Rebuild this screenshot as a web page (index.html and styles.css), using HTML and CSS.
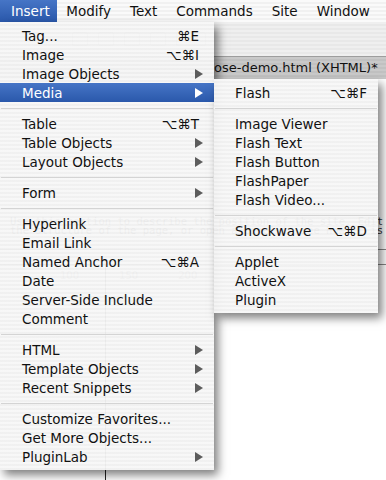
FILE: index.html
```html
<!DOCTYPE html>
<html lang="en">
<head>
  <meta charset="UTF-8" />
  <meta name="viewport" content="width=device-width, initial-scale=1.0" />
  <title>Insert Menu</title>
  <link rel="stylesheet" href="styles.css">
</head>
<body>

  <div class="menubar">
    <span class="menubar-item active">Insert</span>
    <span class="menubar-item">Modify</span>
    <span class="menubar-item">Text</span>
    <span class="menubar-item">Commands</span>
    <span class="menubar-item">Site</span>
    <span class="menubar-item">Window</span>
  </div>

  <div class="window">
    <div class="toolbar">
      <span class="tool"></span>
      <span class="tool"></span>
      <span class="tool"></span>
      <span class="tool"></span>
      <span class="tool wide"></span>
    </div>
    <div class="titlebar"><span>ose-demo.html (XHTML)*</span></div>
    <div class="doc">
      <p class="doc-text">Use this section to describe the position of the site. Edit<br>the structure of the page, or open a panel to see how it is</p>
      <div class="doc-rule"></div>
      <div class="doc-rule"></div>
      <div class="doc-table">
        <span>100</span><span>150</span><span>200</span>
      </div>
      <div class="doc-col"></div>
    </div>
  </div>

  <!-- Insert menu -->
  <div class="menu main-menu">
    <div class="item"><span>Tag...</span><span class="key">&#8984;E</span></div>
    <div class="item"><span>Image</span><span class="key">&#8997;&#8984;I</span></div>
    <div class="item sub"><span>Image Objects</span><svg class="arrow" width="8" height="10"><polygon points="0,0 8,5 0,10" /></svg></div>
    <div class="item sub selected"><span>Media</span><svg class="arrow" width="8" height="10"><polygon points="0,0 8,5 0,10" /></svg></div>
    <div class="sep"></div>
    <div class="item"><span>Table</span><span class="key">&#8997;&#8984;T</span></div>
    <div class="item sub"><span>Table Objects</span><svg class="arrow" width="8" height="10"><polygon points="0,0 8,5 0,10" /></svg></div>
    <div class="item sub"><span>Layout Objects</span><svg class="arrow" width="8" height="10"><polygon points="0,0 8,5 0,10" /></svg></div>
    <div class="sep"></div>
    <div class="item sub"><span>Form</span><svg class="arrow" width="8" height="10"><polygon points="0,0 8,5 0,10" /></svg></div>
    <div class="sep"></div>
    <div class="item"><span>Hyperlink</span></div>
    <div class="item"><span>Email Link</span></div>
    <div class="item"><span>Named Anchor</span><span class="key">&#8997;&#8984;A</span></div>
    <div class="item"><span>Date</span></div>
    <div class="item"><span>Server-Side Include</span></div>
    <div class="item"><span>Comment</span></div>
    <div class="sep"></div>
    <div class="item sub"><span>HTML</span><svg class="arrow" width="8" height="10"><polygon points="0,0 8,5 0,10" /></svg></div>
    <div class="item sub"><span>Template Objects</span><svg class="arrow" width="8" height="10"><polygon points="0,0 8,5 0,10" /></svg></div>
    <div class="item sub"><span>Recent Snippets</span><svg class="arrow" width="8" height="10"><polygon points="0,0 8,5 0,10" /></svg></div>
    <div class="sep"></div>
    <div class="item"><span>Customize Favorites...</span></div>
    <div class="item"><span>Get More Objects...</span></div>
    <div class="item sub"><span>PluginLab</span><svg class="arrow" width="8" height="10"><polygon points="0,0 8,5 0,10" /></svg></div>
  </div>

  <!-- Media submenu -->
  <div class="menu media-menu">
    <div class="item"><span>Flash</span><span class="key">&#8997;&#8984;F</span></div>
    <div class="sep"></div>
    <div class="item"><span>Image Viewer</span></div>
    <div class="item"><span>Flash Text</span></div>
    <div class="item"><span>Flash Button</span></div>
    <div class="item"><span>FlashPaper</span></div>
    <div class="item"><span>Flash Video...</span></div>
    <div class="sep"></div>
    <div class="item"><span>Shockwave</span><span class="key">&#8997;&#8984;D</span></div>
    <div class="sep"></div>
    <div class="item"><span>Applet</span></div>
    <div class="item"><span>ActiveX</span></div>
    <div class="item"><span>Plugin</span></div>
  </div>

</body>
</html>
```

FILE: styles.css
```css
* {
  box-sizing: border-box;
}

body {
  margin: 0;
  width: 386px;
  height: 480px;
  overflow: hidden;
  position: relative;
  background: #fff;
  font-family: "Lucida Grande", "DejaVu Sans", sans-serif;
  font-size: 13.5px;
  color: #111;
}

/* Menu bar */
.menubar {
  height: 22px;
  display: flex;
  align-items: center;
  background: repeating-linear-gradient(to bottom, #fafafa 0 2px, #f1f1f1 2px 4px);
}

.menubar-item {
  height: 22px;
  line-height: 22px;
  padding: 0 9.5px;
}

.menubar-item.active {
  padding: 0 7px 0 11px;
  color: #fff;
  background: linear-gradient(to bottom, #4675c6, #2a58ab);
}

/* Document window behind the menus */
.toolbar {
  height: 35px;
  display: flex;
  align-items: center;
  gap: 10px;
  padding-left: 72px;
  background: repeating-linear-gradient(to bottom, #efefef 0 2px, #e8e8e8 2px 4px);
  border-bottom: 1px solid #9d9d9d;
}

.tool {
  width: 16px;
  height: 14px;
  border: 1px solid #b5b5b5;
  border-radius: 2px;
}

.tool.wide {
  width: 30px;
}

.titlebar {
  height: 22px;
  line-height: 22px;
  padding-left: 214px;
  background: repeating-linear-gradient(to bottom, #c9c9c9 0 2px, #c1c1c1 2px 4px);
  font-size: 13px;
  color: #111;
  white-space: nowrap;
}

.doc {
  position: relative;
  height: 401px;
  background: #fff;
}

.doc-text {
  margin: 0;
  padding: 138px 0 0 10px;
  font-family: "DejaVu Sans Mono", monospace;
  font-size: 10.5px;
  line-height: 9px;
  white-space: nowrap;
  color: #333;
}

.doc-rule {
  height: 1px;
  background: #888;
  margin-top: 14px;
}

.doc-table {
  display: flex;
  gap: 40px;
  padding: 5px 0 0 60px;
  font-size: 10px;
  color: #777;
}

.doc-col {
  position: absolute;
  left: 105px;
  top: 185px;
  bottom: 0;
  width: 1px;
  background: #222;
}

/* Menus */
.menu {
  position: absolute;
  padding: 4px 0;
  background: repeating-linear-gradient(to bottom, rgba(247, 247, 247, 0.96) 0 2px, rgba(240, 240, 240, 0.96) 2px 4px);
  box-shadow: 4px 5px 9px rgba(0, 0, 0, 0.5);
}

.main-menu {
  left: 0;
  top: 22px;
  width: 214px;
}

.media-menu {
  left: 214px;
  top: 79px;
  width: 164px;
}

.item {
  height: 19px;
  display: flex;
  align-items: center;
  padding: 0 15px 0 22px;
  white-space: nowrap;
  color: #111;
}

.media-menu .item {
  padding: 0 11px 0 21px;
}

.item.sub {
  padding-right: 11px;
}

.item .key,
.item .arrow {
  margin-left: auto;
}

.arrow polygon {
  fill: #5c5c5c;
}

.item.selected {
  color: #fff;
  background: linear-gradient(to bottom, #4675c6, #2a58ab);
}

.item.selected .arrow polygon {
  fill: #fff;
}

.sep {
  height: 12px;
  display: flex;
  align-items: center;
}

.sep::after {
  content: "";
  flex: 1;
  height: 1px;
  margin: 0 1px;
  background: #d4d4d4;
}
```
